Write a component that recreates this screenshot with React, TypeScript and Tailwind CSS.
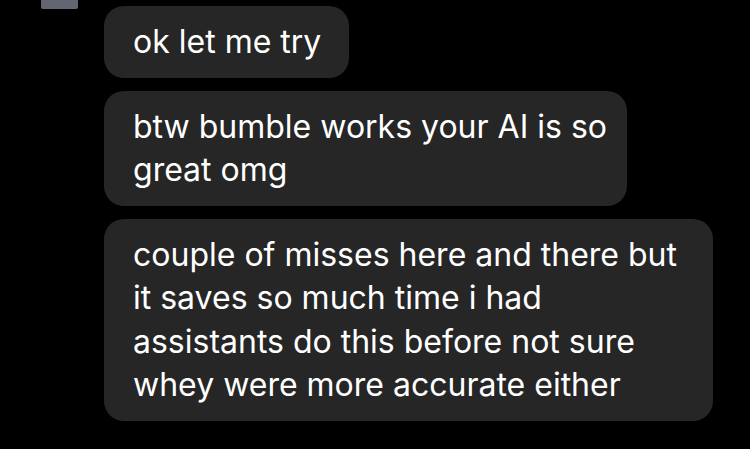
import React from 'react';

interface Bubble {
    lines: string[];
    width: string;
}

const messages: Bubble[] = [
    { lines: ['ok let me try'], width: 'w-[245px]' },
    { lines: ['btw bumble works your AI is so', 'great omg'], width: 'w-[523px]' },
    {
        lines: [
            'couple of misses here and there but',
            'it saves so much time i had',
            'assistants do this before not sure',
            'whey were more accurate either',
        ],
        width: 'w-[609px]',
    },
];

const App: React.FC = () => {
    return (
        <div
            className="w-[750px] h-[449px] bg-black overflow-hidden relative"
            style={{ fontFamily: 'Inter, "Noto Sans", sans-serif' }}
        >
            {/* avatar cut off at the top */}
            <div className="absolute left-[41px] top-0 w-[37px] h-[9px] bg-[#636573] rounded-b-[2px]" />

            <div className="flex flex-col gap-[13px] pt-[6px] pl-[104px]">
                {messages.map((m, i) => (
                    <div
                        key={i}
                        className={`${m.width} bg-[#262626] rounded-[20px] pl-[29px] py-[14px] text-white text-[32px] leading-[43.5px]`}
                    >
                        {m.lines.map((line, j) => (
                            <div key={j} className="whitespace-nowrap">{line}</div>
                        ))}
                    </div>
                ))}
            </div>
        </div>
    );
};

export default App;
